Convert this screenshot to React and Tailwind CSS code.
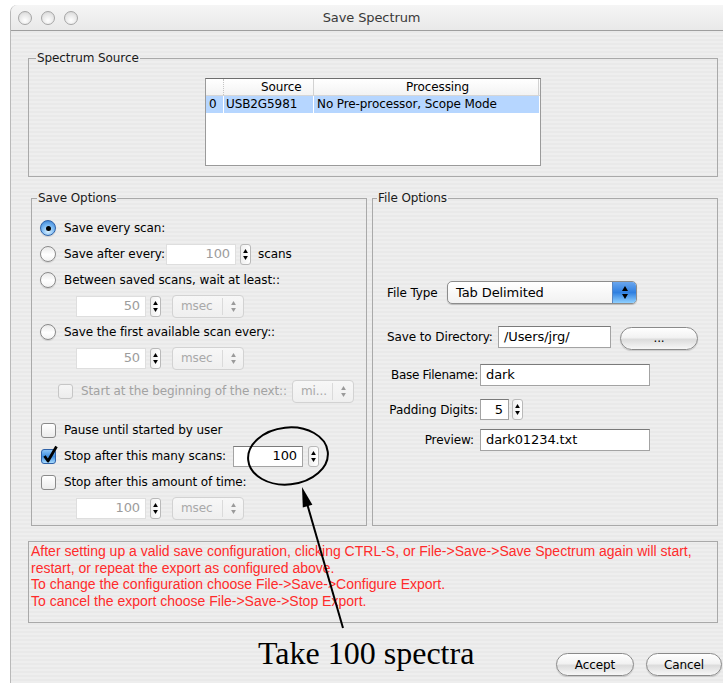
import React from 'react';

const ui = "font-['DejaVu_Sans',sans-serif]";

const Radio = ({ checked }) => (
  <span
    className={`flex h-4 w-4 shrink-0 items-center justify-center rounded-full border ${
      checked
        ? 'border-[#2f62a8] bg-[radial-gradient(circle_at_50%_75%,#d8f0ff_0%,#7ab8f2_50%,#2b78d0_100%)]'
        : 'border-[#8a8a8a] bg-[linear-gradient(#e9e9e9,#ffffff_55%,#f2f2f2)]'
    } shadow-[0_1px_1px_rgba(0,0,0,0.12)]`}
  >
    {checked && <span className="h-[5px] w-[5px] rounded-full bg-black" />}
  </span>
);

const Checkbox = ({ checked, disabled }) => (
  <span
    className={`relative h-[15px] w-[15px] shrink-0 rounded-[3px] border ${
      checked
        ? 'border-[#2f62a8] bg-[linear-gradient(#8cc4f6,#3f8ee0_50%,#a9dcff)]'
        : disabled
        ? 'border-[#c6c6c6] bg-[linear-gradient(#f6f6f6,#ececec)]'
        : 'border-[#8a8a8a] bg-[linear-gradient(#ffffff,#ececec)]'
    }`}
  >
    {checked && (
      <svg className="absolute -top-[5px] left-[0px]" width="16" height="19" viewBox="0 0 16 19">
        <path d="M2.5 11 L6 16 L14.5 1.5" stroke="#000" strokeWidth="2.8" fill="none" strokeLinejoin="round" />
      </svg>
    )}
  </span>
);

const Arrows = ({ color = '#000', size = 5 }) => (
  <span className="flex flex-col items-center gap-[3px]">
    <svg width={size} height={size - 1} viewBox="0 0 6 5">
      <path d="M3 0 L6 5 L0 5 Z" fill={color} />
    </svg>
    <svg width={size} height={size - 1} viewBox="0 0 6 5">
      <path d="M0 0 L6 0 L3 5 Z" fill={color} />
    </svg>
  </span>
);

const Spinner = ({ className = '' }) => (
  <span
    className={`flex h-[21px] w-[11px] shrink-0 items-center justify-center rounded-[3px] border border-[#b9b9b9] bg-[linear-gradient(90deg,#f0f0f0,#ffffff)] ${className}`}
  >
    <Arrows size={5} />
  </span>
);

const Field = ({ value, className = '', dim, left }) => (
  <div
    className={`flex h-[21px] shrink-0 items-center bg-white px-[5px] text-[13px] ${left ? 'justify-start' : 'justify-end'} ${
      dim ? 'border border-[#dedede] text-[#9c9c9c]' : 'border border-[#a3a3a3] border-t-[#7a7a7a] text-black'
    } ${className}`}
  >
    {value}
  </div>
);

const UnitSelect = ({ label, className = '' }) => (
  <div
    className={`flex h-[23px] shrink-0 items-center rounded-[4px] border border-[#d2d2d2] bg-[linear-gradient(#f7f7f7,#efefef)] text-[12px] text-[#a9a9a9] ${className}`}
  >
    <span className="flex-1 pl-[8px]">{label}</span>
    <span className="flex h-[17px] w-[21px] items-center justify-center border-l border-[#dadada]">
      <Arrows color="#9a9a9a" size={5} />
    </span>
  </div>
);

const PillButton = ({ children, className = '' }) => (
  <div
    className={`flex h-[23px] items-center justify-center rounded-full border border-[#8a8a8a] bg-[linear-gradient(#ffffff,#f2f2f2_45%,#dcdcdc_55%,#f7f7f7)] text-[12px] text-black shadow-[0_1px_1px_rgba(0,0,0,0.15)] ${className}`}
  >
    {children}
  </div>
);

const Row = ({ children, className = '' }) => (
  <div className={`flex h-[26px] items-center ${className}`}>{children}</div>
);

const Light = () => (
  <span className="h-[14px] w-[14px] rounded-full border border-[#a6a6a6] bg-[radial-gradient(circle_at_50%_70%,#ffffff_0%,#e6e6e6_60%,#cfcfcf_100%)]" />
);

export default function App() {
  return (
    <div className={`relative h-[683px] w-[723px] overflow-hidden bg-white ${ui} tracking-[-0.1px]`}>
      <div className="ml-[10px] mt-[5px] flex h-[678px] w-[722px] flex-col rounded-tl-[7px] border-l border-[#b9b9b9] bg-[repeating-linear-gradient(180deg,#eeeeee_0px,#eeeeee_2px,#e9e9e9_2px,#e9e9e9_4px)]">
        {/* title bar */}
        <div className="grid h-[26px] shrink-0 grid-cols-[1fr_auto_1fr] items-center rounded-tl-[7px] border-b border-[#9e9e9e] bg-[linear-gradient(#f5f5f5,#e9e9e9)]">
          <div className="flex gap-[9px] pl-[7px]">
            <Light />
            <Light />
            <Light />
          </div>
          <div className="text-[13px] text-[#3a3a3a]">Save Spectrum</div>
          <div />
        </div>

        {/* spectrum source */}
        <fieldset className="ml-[17px] mt-[20px] w-[690px] border border-[#a9a9a9]">
          <legend className="ml-[7px] px-[1px] text-[12px] leading-[15px] text-[#1a1a1a]">Spectrum Source</legend>
          <div className="mx-auto mb-[10px] mt-[12px] h-[88px] w-[336px] border border-[#9a9a9a] border-t-[#6e6e6e] bg-white text-[12px] leading-[17px]">
            <div className="flex h-[17px] border-b border-[#d6d6d6] bg-[linear-gradient(#ffffff,#f3f3f3)]">
              <div className="w-[18px] border-r border-dotted border-[#c4c4c4]" />
              <div className="w-[90px] border-r border-[#d2d2d2] pl-[37px]">Source</div>
              <div className="w-[225px] border-r border-[#d2d2d2] pl-[92px]">Processing</div>
            </div>
            <div className="flex h-[17px] w-[333px] bg-[#b6d6ff]">
              <div className="w-[18px] border-r border-white pl-[3px]">0</div>
              <div className="w-[90px] border-r border-white pl-[2px]">USB2G5981</div>
              <div className="w-[225px] pl-[3px]">No Pre-processor, Scope Mode</div>
            </div>
          </div>
        </fieldset>

        {/* save / file options */}
        <div className="mt-[14px] flex">
          <fieldset className="ml-[20px] h-[335px] w-[336px] border border-[#a9a9a9] text-[12px]">
            <legend className="ml-[5px] px-[1px] leading-[15px] text-[#1a1a1a]">Save Options</legend>
            <div className="flex flex-col pt-[9px]">
              <Row className="pl-[8px]">
                <Radio checked />
                <span className="ml-[8px]">Save every scan:</span>
              </Row>
              <Row className="pl-[8px]">
                <Radio />
                <span className="ml-[8px] w-[102px]">Save after every:</span>
                <Field value="100" dim className="w-[70px]" />
                <Spinner className="ml-[4px]" />
                <span className="ml-[7px]">scans</span>
              </Row>
              <Row className="pl-[8px]">
                <Radio />
                <span className="ml-[8px]">Between saved scans, wait at least::</span>
              </Row>
              <Row className="pl-[44px]">
                <Field value="50" dim className="w-[70px]" />
                <Spinner className="ml-[4px]" />
                <UnitSelect label="msec" className="ml-[11px] w-[72px]" />
              </Row>
              <Row className="pl-[8px]">
                <Radio />
                <span className="ml-[8px]">Save the first available scan every::</span>
              </Row>
              <Row className="pl-[44px]">
                <Field value="50" dim className="w-[70px]" />
                <Spinner className="ml-[4px]" />
                <UnitSelect label="msec" className="ml-[11px] w-[72px]" />
              </Row>
              <Row className="mt-[7px] pl-[26px]">
                <Checkbox disabled />
                <span className="ml-[8px] w-[211px] text-[#a2a2a2]">Start at the beginning of the next::</span>
                <UnitSelect label="mi..." className="w-[62px]" />
              </Row>
              <Row className="mt-[13px] pl-[9px]">
                <Checkbox />
                <span className="ml-[8px]">Pause until started by user</span>
              </Row>
              <Row className="pl-[9px]">
                <Checkbox checked />
                <span className="ml-[8px] w-[169px]">Stop after this many scans:</span>
                <Field value="100" className="w-[70px]" />
                <Spinner className="ml-[5px]" />
              </Row>
              <Row className="pl-[9px]">
                <Checkbox />
                <span className="ml-[8px]">Stop after this amount of time:</span>
              </Row>
              <Row className="pl-[44px]">
                <Field value="100" dim className="w-[70px]" />
                <Spinner className="ml-[4px]" />
                <UnitSelect label="msec" className="ml-[11px] w-[72px]" />
              </Row>
            </div>
          </fieldset>

          <fieldset className="ml-[5px] h-[335px] w-[346px] border border-[#a9a9a9] text-[12px]">
            <legend className="ml-[4px] px-[1px] leading-[15px] text-[#1a1a1a]">File Options</legend>
            <div className="flex flex-col pl-[14px] pt-[75px]">
              <div className="flex h-[23px] items-center">
                <span className="w-[60px]">File Type</span>
                <div className="flex h-[23px] w-[190px] items-stretch overflow-hidden rounded-[5px] border border-[#8c8c8c] bg-[linear-gradient(#ffffff,#f1f1f1)] shadow-[0_1px_1px_rgba(0,0,0,0.2)]">
                  <span className="flex-1 pl-[8px] text-[13px] leading-[21px]">Tab Delimited</span>
                  <span className="flex w-[24px] items-center justify-center border-l border-[#5a86c0] bg-[linear-gradient(#6aa6ee,#2f7fe0_50%,#8fd0ff)]">
                    <Arrows size={6} />
                  </span>
                </div>
              </div>
              <div className="mt-[21px] flex h-[23px] items-center">
                <span className="w-[111px] whitespace-nowrap">Save to Directory:</span>
                <Field value="/Users/jrg/" left className="h-[22px] w-[113px]" />
                <PillButton className="ml-[9px] mt-[3px] w-[78px]">...</PillButton>
              </div>
              <div className="mt-[16px] flex h-[22px] items-center">
                <span className="w-[91px] whitespace-nowrap text-right tracking-[-0.3px]">Base Filename:</span>
                <Field value="dark" left className="ml-[2px] h-[22px] w-[170px]" />
              </div>
              <div className="mt-[13px] flex h-[21px] items-center">
                <span className="w-[91px] whitespace-nowrap text-right">Padding Digits:</span>
                <Field value="5" className="ml-[2px] w-[29px]" />
                <Spinner className="ml-[3px]" />
              </div>
              <div className="mt-[9px] flex h-[22px] items-center">
                <span className="w-[91px] whitespace-nowrap pr-[4px] text-right">Preview:</span>
                <Field value="dark01234.txt" left className="ml-[2px] h-[22px] w-[170px]" />
              </div>
            </div>
          </fieldset>
        </div>

        {/* export notes */}
        <div className="ml-[17px] mt-[15px] h-[82px] w-[690px] border border-[#a9a9a9] px-[2px] pt-[1px] font-['Liberation_Sans',Arial,sans-serif] text-[14px] leading-[16.5px] tracking-normal text-[#ff2b2b]">
          <p className="whitespace-nowrap">After setting up a valid save configuration, clicking CTRL-S, or File-&gt;Save-&gt;Save Spectrum again will start,</p>
          <p>restart, or repeat the export as configured above.</p>
          <p>To change the configuration choose File-&gt;Save-&gt;Configure Export.</p>
          <p>To cancel the export choose File-&gt;Save-&gt;Stop Export.</p>
        </div>

        {/* footer */}
        <div className="mt-[14px] flex items-start">
          <span className="ml-[247px] font-['Liberation_Serif',serif] text-[32px] leading-none tracking-normal text-black">
            Take 100 spectra
          </span>
          <PillButton className="ml-auto mt-[16px] w-[78px]">Accept</PillButton>
          <PillButton className="ml-[12px] mr-[10px] mt-[16px] w-[76px]">Cancel</PillButton>
        </div>
      </div>

      {/* callout ring and pointer */}
      <svg className="pointer-events-none absolute inset-0" width="723" height="683" viewBox="0 0 723 683">
        <ellipse cx="288" cy="456" rx="40" ry="28.5" transform="rotate(-6 288 456)" fill="none" stroke="#000" strokeWidth="2" />
        <line x1="343" y1="628" x2="306" y2="500" stroke="#000" strokeWidth="2" />
        <path d="M302 487 L312.4 504.8 L302.8 507.6 Z" fill="#000" />
      </svg>
    </div>
  );
}
